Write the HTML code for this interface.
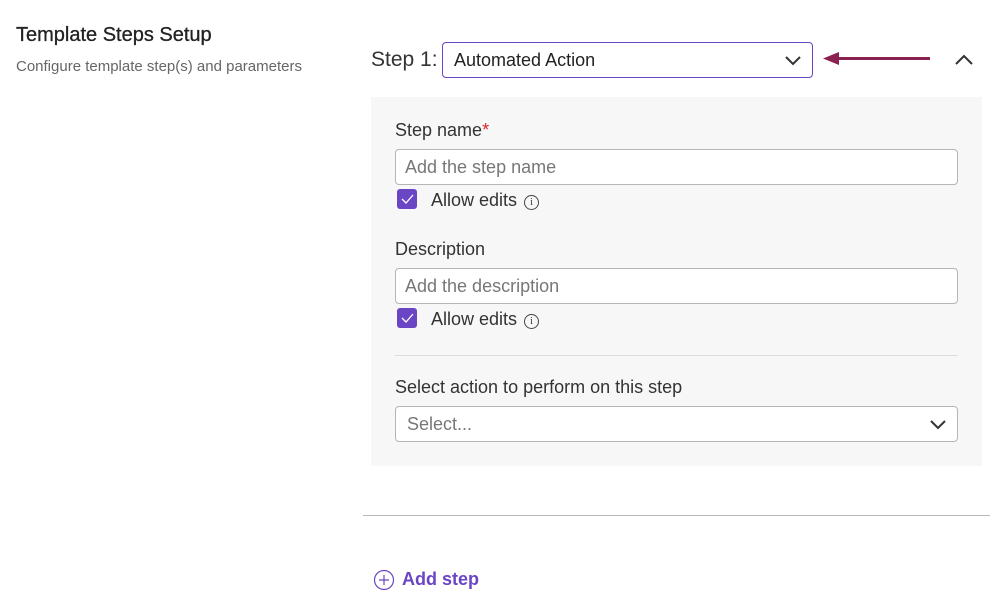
<!DOCTYPE html>
<html><head><style>
body{margin:0;width:999px;height:606px;background:#fff;font-family:"Liberation Sans",sans-serif;position:relative;overflow:hidden;color:#222}
.a{position:absolute}
.inp{position:absolute;border:1px solid #b5b5b5;border-radius:4px;background:#fff;box-sizing:border-box;font-size:18px;color:#777;padding-left:9px;display:flex;align-items:center}
.lbl{position:absolute;font-size:18px;color:#333}
.cb{position:absolute;width:20px;height:20px;background:#6a45c4;border-radius:3px}
.info{display:inline-block;width:13px;height:13px;border:1px solid #444;border-radius:50%;font-size:10px;text-align:center;line-height:13px;font-family:"Liberation Serif",serif;vertical-align:1px;margin-left:7px}
</style></head><body>
<div class="a" style="left:16px;top:24px;font-size:20px;color:#222;-webkit-text-stroke:0.3px #222">Template Steps Setup</div>
<div class="a" style="left:16px;top:58px;font-size:15px;color:#666">Configure template step(s) and parameters</div>
<div class="a" style="left:371px;top:48px;font-size:21px;color:#333">Step 1:</div>
<div class="inp" style="left:442px;top:42px;width:371px;height:36px;border:1.5px solid #6a45c4;color:#222;padding-left:11px">Automated Action</div>
<svg class="a" style="left:784px;top:53px" width="18" height="14"><path d="M2 4l7 7 7-7" fill="none" stroke="#333" stroke-width="2"/></svg>
<svg class="a" style="left:820px;top:50px" width="115" height="20"><path d="M110 8.5H14" stroke="#8b2150" stroke-width="3"/><path d="M3 8.5l16-6.5v13z" fill="#8b2150"/></svg>
<svg class="a" style="left:954px;top:52px" width="20" height="16"><path d="M2 12l8-8 8 8" fill="none" stroke="#333" stroke-width="2"/></svg>
<div class="a" style="left:371px;top:97px;width:611px;height:369px;background:#f7f7f7"></div>
<div class="lbl" style="left:395px;top:120px">Step name<span style="color:#d22">*</span></div>
<div class="inp" style="left:395px;top:149px;width:563px;height:36px">Add the step name</div>
<div class="cb" style="left:397px;top:189px"><svg width="20" height="20"><path d="M5 10l4 4 7-8" fill="none" stroke="#fff" stroke-width="1.3"/></svg></div>
<div class="lbl" style="left:431px;top:190px">Allow edits<span class="info">i</span></div>
<div class="lbl" style="left:395px;top:239px">Description</div>
<div class="inp" style="left:395px;top:268px;width:563px;height:36px">Add the description</div>
<div class="cb" style="left:397px;top:308px"><svg width="20" height="20"><path d="M5 10l4 4 7-8" fill="none" stroke="#fff" stroke-width="1.3"/></svg></div>
<div class="lbl" style="left:431px;top:309px">Allow edits<span class="info">i</span></div>
<div class="a" style="left:395px;top:355px;width:563px;height:1px;background:#ddd"></div>
<div class="lbl" style="left:395px;top:377px">Select action to perform on this step</div>
<div class="inp" style="left:395px;top:406px;width:563px;height:36px;padding-left:11px">Select...</div>
<svg class="a" style="left:929px;top:417px" width="18" height="14"><path d="M2 4l7 7 7-7" fill="none" stroke="#333" stroke-width="2"/></svg>
<div class="a" style="left:363px;top:515px;width:627px;height:1px;background:#bbb"></div>
<svg class="a" style="left:373px;top:569px" width="22" height="22"><circle cx="11" cy="11" r="9.5" fill="none" stroke="#6a45c4" stroke-width="1.2"/><path d="M11 6v10M6 11h10" stroke="#6a45c4" stroke-width="1.2"/></svg>
<div class="a" style="left:402px;top:569px;font-size:18px;font-weight:bold;color:#6a45c4">Add step</div>
</body></html>
